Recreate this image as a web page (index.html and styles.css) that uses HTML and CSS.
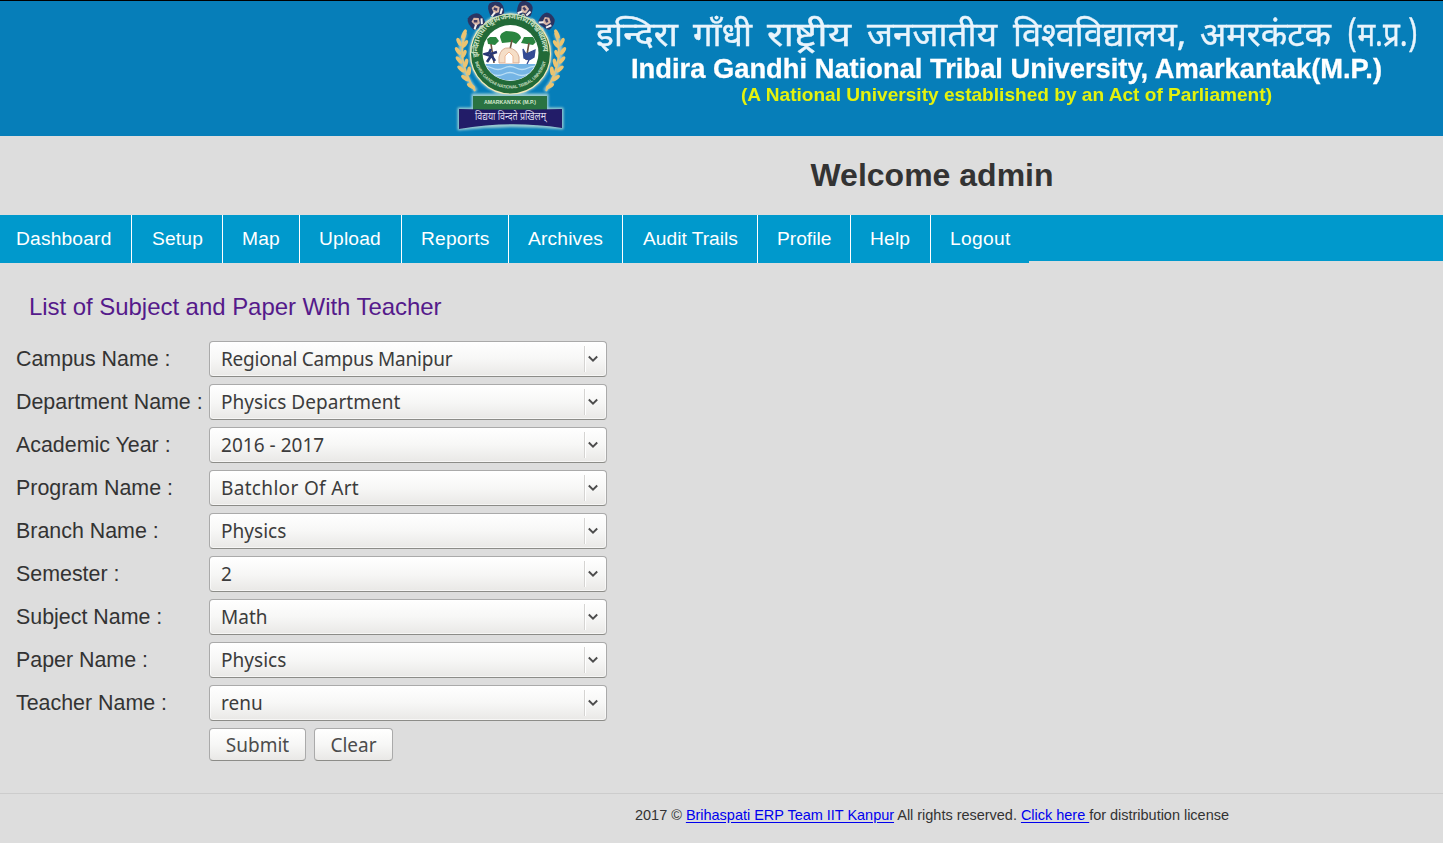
FILE: index.html
```
<!DOCTYPE html>
<html lang="en">
<head>
<meta charset="utf-8">
<title>List of Subject and Paper With Teacher</title>
<link rel="stylesheet" href="styles.css">
</head>
<body>
<svg width="0" height="0" class="defs">
  <symbol id="chev" viewBox="0 0 10 8"><path d="M0.800 1.500 L5 5.600 L9.200 1.500" fill="none" stroke="#4c4c4c" stroke-width="1.900"/></symbol>
</svg>
<header class="banner">
<svg class="banner-art" width="1443" height="135" viewBox="0 1 1443 135">
  <defs>
    <filter id="soft" x="-10%" y="-10%" width="120%" height="120%"><feGaussianBlur stdDeviation="0.6"/></filter>
    <filter id="softText" x="-5%" y="-10%" width="110%" height="120%"><feGaussianBlur stdDeviation="0.6"/></filter>
    <filter id="glow" x="-20%" y="-20%" width="140%" height="140%"><feGaussianBlur stdDeviation="1.3"/></filter>
    <clipPath id="disc"><circle cx="510.500" cy="53" r="27.500"/></clipPath>
    <path id="arcTop" d="M478.500 57 A32.500 32.500 0 1 1 542.500 57"/>
    <path id="arcBottom" d="M475 62 A37 37 0 0 0 546 62"/>
    <g id="lion">
      <path d="M-7 6 Q-9 -4 -5 -7 Q0 -9 5 -6 Q9 -3 7 6 L4 7 L-4 7Z" fill="#2c3564"/>
      <path d="M-4 -2 L0 -4 L4 -1 L2 4 L-3 4Z" fill="#d9b8a8"/>
      <path d="M-6 6 L-2 3 M3 6 L6 1" stroke="#f3f0ef" stroke-width="2"/>
      <path d="M-2 -1 L1 1" stroke="#413b64" stroke-width="2.500"/>
    </g>
    <g id="wheat" fill="#ecc470">
      <path d="M466 33 Q455 57 475 91" fill="none" stroke="#e2c57d" stroke-width="2"/>
      <ellipse cx="464" cy="34" rx="2" ry="5" transform="rotate(25 464 34)"/>
      <ellipse cx="459" cy="42" rx="2" ry="4.500" transform="rotate(-25 459 42)"/>
      <ellipse cx="465" cy="44" rx="2" ry="4.500" transform="rotate(35 465 44)"/>
      <ellipse cx="458" cy="51" rx="2" ry="4.500" transform="rotate(-35 458 51)"/>
      <ellipse cx="464" cy="54" rx="2" ry="4.500" transform="rotate(25 464 54)"/>
      <ellipse cx="459" cy="60" rx="2" ry="4.500" transform="rotate(-40 459 60)"/>
      <ellipse cx="466" cy="63" rx="2" ry="4.500" transform="rotate(15 466 63)"/>
      <ellipse cx="461" cy="69" rx="2" ry="4.500" transform="rotate(-50 461 69)"/>
      <ellipse cx="469" cy="71" rx="2" ry="4.500" transform="rotate(5 469 71)"/>
      <ellipse cx="465" cy="78" rx="2" ry="4.500" transform="rotate(-55 465 78)"/>
      <ellipse cx="471" cy="86" rx="2" ry="4.500" transform="rotate(-60 471 86)"/>
    </g>
  </defs>
  <g filter="url(#glow)" opacity=".65" fill="#e5f2dd" stroke="#e5f2dd">
    <circle cx="510.500" cy="54" r="41"/>
    <path d="M472 94H548V108H563V129Q510 124 458 130V108H472Z"/>
    <path d="M465 34Q452 60 476 91 M556 34Q569 60 545 91" fill="none" stroke-width="4"/>
  </g>
  <g filter="url(#soft)">
    <use href="#wheat"/><use href="#wheat" transform="translate(1021 0) scale(-1 1)"/>
    <circle cx="510.500" cy="54" r="40" fill="#226b38" stroke="#f2e9bb" stroke-width="1.200"/>
    <use href="#lion" transform="translate(476 21) rotate(-35)"/>
    <use href="#lion" transform="translate(496 9) rotate(-15)"/>
    <use href="#lion" transform="translate(525 9) rotate(15)"/>
    <use href="#lion" transform="translate(547 21) rotate(35)"/>
    <circle cx="510.500" cy="53" r="28" fill="#fff"/>
    <g clip-path="url(#disc)">
      <rect x="480" y="64" width="60" height="20" fill="#75b5e5"/>
      <path d="M480 68q6-3 12 0t12 0t12 0t12 0t12 0 M480 74q6-3 12 0t12 0t12 0t12 0t12 0" fill="none" stroke="#b9def5" stroke-width="1.300"/>
      <path d="M488 44L487 39L490 37L496 37L499 41L495 45Z M500 37Q500 33 506 31Q520 31 521 38L516 44L512 42L502 43Z M521 43L524 37L533 37L537 41L533 45Z" fill="#2b8540"/>
      <path d="M491 44L494 63 M512 40L509 54 M529 43L526 60" stroke="#6e5640" stroke-width="1.600"/>
      <path d="M499 63V57Q501 47 509 48Q517 49 519 57V63Z" fill="#f5dec7" stroke="#d7ab91"/>
      <path d="M505 63V56L509 52L513 56V63" fill="#fff" stroke="#eeb995"/>
      <path d="M491 49L489 53L485 54L491 56L487 62 M490 54L497 52 M491 55L495 61" fill="none" stroke="#2b3774" stroke-width="2.600"/>
      <path d="M523 49L526 54L535 50L534 57L529 60L524 58Z M529 60L527 64" fill="#344b93" stroke="#344b93" stroke-width="1.300"/>
    </g>
    <path d="M473 96H547V111H473Z" fill="#2a7342"/>
    <path d="M459 109Q510 110 562 109V128Q510 120 459 129Z" fill="#201a68"/>
  </g>
  <text class="seal-hindi"><textPath href="#arcTop" textLength="108">इन्दिरा गाँधी राष्ट्रीय जनजातीय विश्वविद्यालय</textPath></text>
  <text class="seal-text"><textPath href="#arcBottom" textLength="98">INDIRA GANDHI NATIONAL TRIBAL UNIVERSITY</textPath></text>
  <text class="seal-place" x="484" y="104" textLength="52" lengthAdjust="spacingAndGlyphs">AMARKANTAK (M.P.)</text>
  <text class="seal-motto" x="475" y="120" textLength="71" lengthAdjust="spacingAndGlyphs">विद्यया विन्दते प्रखिलम्</text>
  <g filter="url(#softText)">
    <g class="name-hindi">
      <text x="596" y="45.500" textLength="82" lengthAdjust="spacingAndGlyphs">इन्दिरा</text>
      <text x="693" y="45.500" textLength="59" lengthAdjust="spacingAndGlyphs">गाँधी</text>
      <text x="767" y="45.500" textLength="84" lengthAdjust="spacingAndGlyphs">राष्ट्रीय</text>
      <text x="867" y="45.500" textLength="130" lengthAdjust="spacingAndGlyphs">जनजातीय</text>
      <text x="1013" y="45.500" textLength="173" lengthAdjust="spacingAndGlyphs">विश्&#x200d;वविद्यालय,</text>
      <text x="1200" y="45.500" textLength="131" lengthAdjust="spacingAndGlyphs">अमरकंटक</text>
      <text x="1347" y="45.500" textLength="71" lengthAdjust="spacingAndGlyphs">(म.प्र.)</text>
    </g>
    <text class="name-english" x="631" y="78" textLength="751" lengthAdjust="spacingAndGlyphs">Indira Gandhi National Tribal University, Amarkantak(M.P.)</text>
    <text class="name-note" x="741" y="101" textLength="531" lengthAdjust="spacingAndGlyphs">(A National University established by an Act of Parliament)</text>
  </g>
</svg>
</header>
<h1 class="welcome">Welcome admin</h1>
<nav class="menu">
  <a>Dashboard</a><a>Setup</a><a>Map</a><a>Upload</a><a>Reports</a><a>Archives</a><a>Audit Trails</a><a>Profile</a><a>Help</a><a>Logout</a>
</nav>
<main class="content">
  <h2 class="title">List of Subject and Paper With Teacher</h2>
  <form class="fields">
    <label>Campus Name :</label><div class="select"><span class="tight">Regional Campus Manipur</span><i><svg><use href="#chev"/></svg></i></div>
    <label>Department Name :</label><div class="select"><span>Physics Department</span><i><svg><use href="#chev"/></svg></i></div>
    <label>Academic Year :</label><div class="select"><span>2016 - 2017</span><i><svg><use href="#chev"/></svg></i></div>
    <label>Program Name :</label><div class="select"><span class="loose">Batchlor Of Art</span><i><svg><use href="#chev"/></svg></i></div>
    <label>Branch Name :</label><div class="select"><span>Physics</span><i><svg><use href="#chev"/></svg></i></div>
    <label>Semester :</label><div class="select"><span>2</span><i><svg><use href="#chev"/></svg></i></div>
    <label>Subject Name :</label><div class="select"><span>Math</span><i><svg><use href="#chev"/></svg></i></div>
    <label>Paper Name :</label><div class="select"><span>Physics</span><i><svg><use href="#chev"/></svg></i></div>
    <label>Teacher Name :</label><div class="select"><span>renu</span><i><svg><use href="#chev"/></svg></i></div>
    <div class="actions"><button type="button" class="submit">Submit</button><button type="button" class="clear">Clear</button></div>
  </form>
</main>
<footer class="footer">2017 © <a>Brihaspati ERP Team IIT Kanpur</a> All rights reserved. <a>Click here </a>for distribution license</footer>
</body>
</html>
```
FILE: styles.css
```
* { box-sizing: border-box; }
body {
  margin: 0;
  height: 843px;
  overflow: hidden;
  background: #ddd;
  color: #333;
  font-family: "Liberation Sans", Arial, sans-serif;
}
.defs { display: block; height: 0; }
.banner { height: 136px; border-top: 1px solid #000; background: #067eb9; }
.banner-art { display: block; }
.name-hindi { font: 34px "Noto Sans Devanagari", "Lohit Devanagari", "Noto Sans", sans-serif; fill: #e9f4fc; stroke: #e9f4fc; stroke-width: .4px; }
.name-english { font: bold 28px "Liberation Sans", sans-serif; fill: #fff; stroke: #fff; stroke-width: .3px; }
.name-note { font: bold 18.5px "Liberation Sans", sans-serif; fill: #e4f20b; }
.seal-hindi { font: bold 8px "Noto Sans Devanagari", "Noto Sans", sans-serif; fill: #c5dec0; }
.seal-text { font: bold 4.5px "Liberation Sans", sans-serif; fill: #c5dec0; }
.seal-place { font: bold 5px "Liberation Sans", sans-serif; fill: #d5e8ce; }
.seal-motto { font: 11px "Noto Sans Devanagari", "Noto Sans", sans-serif; fill: #ded9ee; }
.welcome { margin: 0; height: 79px; padding-left: 421px; line-height: 78px; text-align: center; font-size: 32px; }
.menu {
  height: 46px;
  background: #09c;
  display: grid;
  grid-template-columns: 132px 91px 77px 102px 107px 114px 135px 93px 80px 99px;
}
.menu a {
  height: 48px;
  line-height: 47px;
  padding-left: 19px;
  background: #09c;
  border-right: 1px solid #fff;
  color: #fff;
  font-size: 19.2px;
  letter-spacing: .18px;
  white-space: nowrap;
}
.menu a:first-child { padding-left: 16px; }
.menu a:nth-child(2) { padding-left: 20px; }
.menu a:nth-child(7) { padding-left: 20px; letter-spacing: 0; }
.menu a:nth-child(8) { letter-spacing: 0; }
.menu a:last-child { width: 98px; border-right: 0; letter-spacing: .35px; }
.content { height: 533px; padding: 30px 0 0 16px; border-bottom: 1px solid #ccc; }
.title { margin: 0 0 0 13px; height: 50px; line-height: 31px; font-size: 24px; letter-spacing: -.05px; font-weight: normal; color: #551a8b; }
.fields {
  display: grid;
  grid-template-columns: 193px 398px;
  grid-auto-rows: 36px;
  row-gap: 7px;
}
.fields label { line-height: 36px; font-size: 21.4px; white-space: nowrap; }
.select, .actions button {
  border: 1px solid #aaa;
  border-bottom-color: #8c8c88;
  border-radius: 4px;
  background: linear-gradient(#fff, #f7f7f6 50%, #e9e8e6);
  color: #3c3c3c;
  font-family: "Noto Sans", sans-serif;
  font-size: 19px;
}
.select {
  display: flex;
  align-items: center;
  justify-content: space-between;
  padding-left: 11px;
  box-shadow: inset 0 0 0 1px rgba(255,255,255,.6);
}
.select span { line-height: 34px; letter-spacing: .03px; }
.select .tight { letter-spacing: -.23px; }
.select .loose { letter-spacing: .33px; }
.select i {
  width: 22px;
  height: 26px;
  border-left: 1px solid #d5d4d2;
  box-shadow: inset 1px 0 #fff;
  display: flex;
  align-items: center;
  padding: 0 0 1px 3px;
}
.select svg { width: 10px; height: 8px; }
.actions { grid-column: 2; display: flex; gap: 8px; }
.actions button { height: 33px; padding: 1px 0 0; line-height: 31px; color: #4c4c4c; }
.submit { width: 97px; }
.clear { width: 79px; }
.footer { height: 49px; padding: 11px 0 0 421px; text-align: center; font-size: 14.5px; letter-spacing: -.02px; line-height: 20px; white-space: nowrap; }
.footer a { color: #00e; text-decoration: underline; text-underline-offset: 2px; white-space: pre; }
```
